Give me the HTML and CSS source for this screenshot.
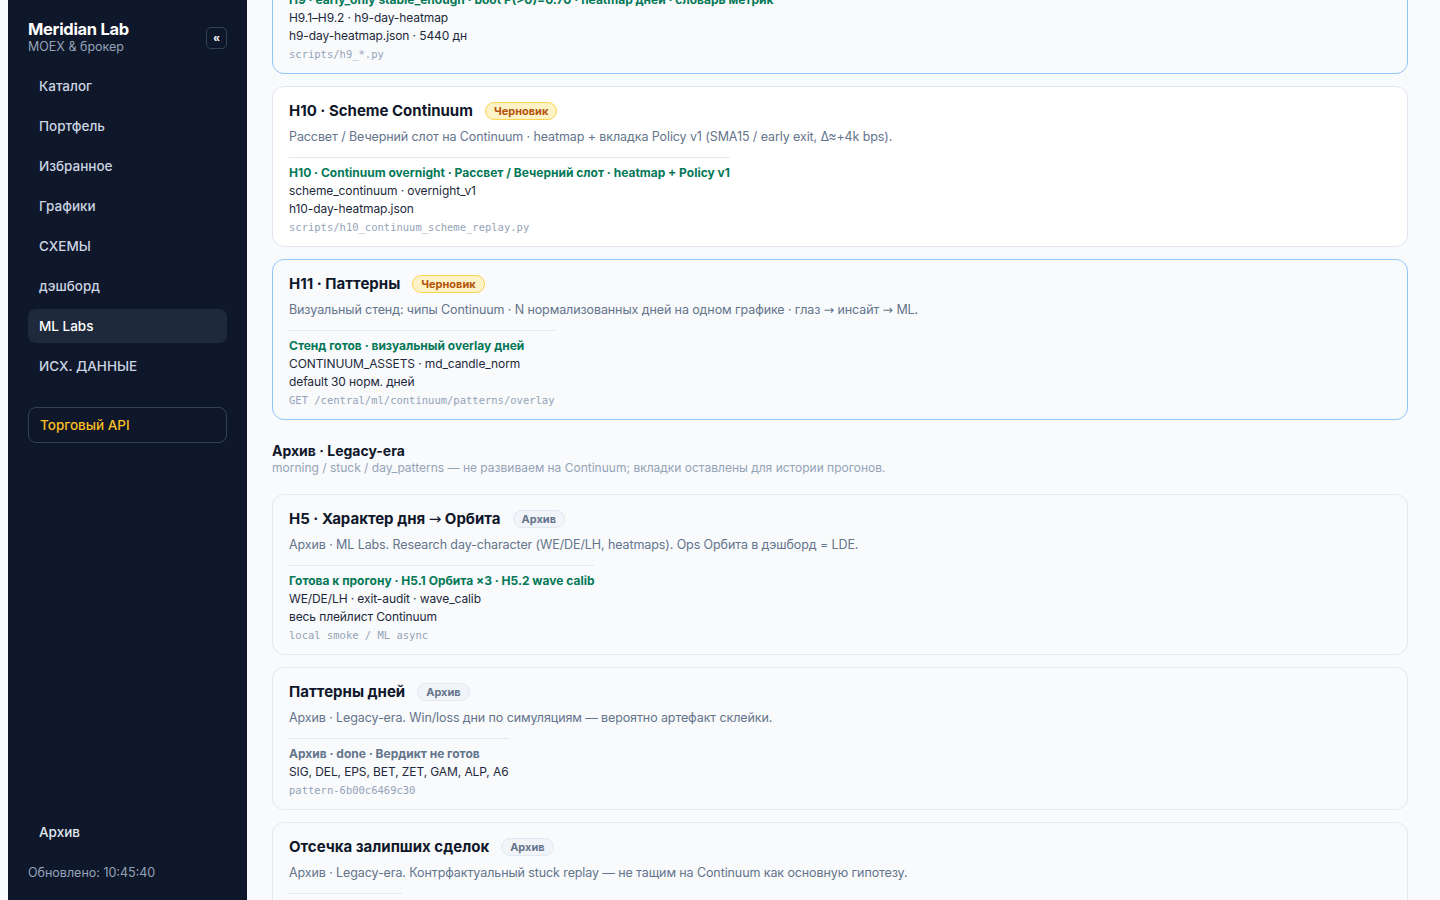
FILE: index.html
```html
<!DOCTYPE html>
<html lang="ru">
<head>
    <meta charset="UTF-8">
    <meta name="viewport" content="width=device-width, initial-scale=1.0">
    <title>ML Labs · Meridian Lab</title>
    <link rel="stylesheet" href="styles.css">
</head>
<body>
    <div class="app">
        <aside class="sidebar">
            <div class="brand">
                <div>
                    <div class="brand-name">Meridian Lab</div>
                    <div class="brand-sub">MOEX &amp; брокер</div>
                </div>
                <button class="collapse-btn" type="button">«</button>
            </div>

            <nav class="nav">
                <a class="nav-item" href="#">Каталог</a>
                <a class="nav-item" href="#">Портфель</a>
                <a class="nav-item" href="#">Избранное</a>
                <a class="nav-item" href="#">Графики</a>
                <a class="nav-item" href="#">СХЕМЫ</a>
                <a class="nav-item" href="#">дэшборд</a>
                <a class="nav-item active" href="#">ML Labs</a>
                <a class="nav-item" href="#">ИСХ. ДАННЫЕ</a>
            </nav>

            <a class="nav-item api-link" href="#">Торговый API</a>

            <div class="sidebar-bottom">
                <a class="nav-item" href="#">Архив</a>
                <div class="updated">Обновлено: 10:45:40</div>
            </div>
        </aside>

        <main class="main" id="main">
            <h1 class="page-title">ML Labs</h1>
            <p class="section-sub">Гипотезы на Continuum: стенды, прогоны, артефакты.</p>

            <div class="card-list">
                <div class="card current">
                    <div class="card-head">
                        <h3>H9 · Heatmap дней</h3>
                        <span class="badge done">Готово</span>
                    </div>
                    <p class="card-desc">Heatmap по дням Continuum · устойчивость early_only и словарь метрик.</p>
                    <div class="meta">
                        <div class="meta-status">H9 · early_only stable_enough · boot P(&gt;0)=0.70 · heatmap дней · словарь метрик</div>
                        <div class="meta-line">H9.1–H9.2 · h9-day-heatmap</div>
                        <div class="meta-line">h9-day-heatmap.json · 5440 дн</div>
                        <div class="meta-code">scripts/h9_*.py</div>
                    </div>
                </div>

                <div class="card white" id="anchor">
                    <div class="card-head">
                        <h3>H10 · Scheme Continuum</h3>
                        <span class="badge draft">Черновик</span>
                    </div>
                    <p class="card-desc">Рассвет / Вечерний слот на Continuum · heatmap + вкладка Policy v1 (SMA15 / early exit, Δ≈+4k bps).</p>
                    <div class="meta">
                        <div class="meta-status">H10 · Continuum overnight · Рассвет / Вечерний слот · heatmap + Policy v1</div>
                        <div class="meta-line">scheme_continuum · overnight_v1</div>
                        <div class="meta-line">h10-day-heatmap.json</div>
                        <div class="meta-code">scripts/h10_continuum_scheme_replay.py</div>
                    </div>
                </div>

                <div class="card current">
                    <div class="card-head">
                        <h3>H11 · Паттерны</h3>
                        <span class="badge draft">Черновик</span>
                    </div>
                    <p class="card-desc">Визуальный стенд: чипы Continuum · N нормализованных дней на одном графике · глаз <span class="arrow">→</span> инсайт <span class="arrow">→</span> ML.</p>
                    <div class="meta">
                        <div class="meta-status">Стенд готов · визуальный overlay дней</div>
                        <div class="meta-line">CONTINUUM_ASSETS · md_candle_norm</div>
                        <div class="meta-line">default 30 норм. дней</div>
                        <div class="meta-code">GET /central/ml/continuum/patterns/overlay</div>
                    </div>
                </div>
            </div>

            <h2 class="section-title">Архив · Legacy-era</h2>
            <p class="section-sub">morning / stuck / day_patterns — не развиваем на Continuum; вкладки оставлены для истории прогонов.</p>

            <div class="card-list">
                <div class="card">
                    <div class="card-head">
                        <h3>H5 · Характер дня <span class="arrow">→</span> Орбита</h3>
                        <span class="badge archive">Архив</span>
                    </div>
                    <p class="card-desc">Архив · ML Labs. Research day-character (WE/DE/LH, heatmaps). Ops Орбита в дэшборд = LDE.</p>
                    <div class="meta">
                        <div class="meta-status">Готова к прогону · H5.1 Орбита ×3 · H5.2 wave calib</div>
                        <div class="meta-line">WE/DE/LH · exit-audit · wave_calib</div>
                        <div class="meta-line">весь плейлист Continuum</div>
                        <div class="meta-code">local smoke / ML async</div>
                    </div>
                </div>

                <div class="card">
                    <div class="card-head">
                        <h3>Паттерны дней</h3>
                        <span class="badge archive">Архив</span>
                    </div>
                    <p class="card-desc">Архив · Legacy-era. Win/loss дни по симуляциям — вероятно артефакт склейки.</p>
                    <div class="meta">
                        <div class="meta-status muted">Архив · done · Вердикт не готов</div>
                        <div class="meta-line">SIG, DEL, EPS, BET, ZET, GAM, ALP, A6</div>
                        <div class="meta-code">pattern-6b00c6469c30</div>
                    </div>
                </div>

                <div class="card">
                    <div class="card-head">
                        <h3>Отсечка залипших сделок</h3>
                        <span class="badge archive">Архив</span>
                    </div>
                    <p class="card-desc">Архив · Legacy-era. Контрфактуальный stuck replay — не тащим на Continuum как основную гипотезу.</p>
                    <div class="meta">
                        <div class="meta-status muted">Архив · done</div>
                        <div class="meta-line">stuck_replay · cutoff</div>
                        <div class="meta-code">stuck-replay</div>
                    </div>
                </div>
            </div>
        </main>
    </div>

    <script src="main.js"></script>
</body>
</html>
```

FILE: styles.css
```css
body {
    font-family: Inter, "Noto Sans", Arial, sans-serif;
    background-color: #f8fafc;
    color: #0f172a;
    margin: 0;
    padding: 0;
}

.app {
    display: flex;
    height: 100vh;
    padding-left: 8px;
}

/* sidebar */
.sidebar {
    width: 239px;
    flex-shrink: 0;
    box-sizing: border-box;
    background-color: #0f172a;
    padding: 19px 20px 20px;
    display: flex;
    flex-direction: column;
}

.brand {
    display: flex;
    align-items: center;
    justify-content: space-between;
    margin-bottom: 15px;
}

.brand-name {
    color: #ffffff;
    font-size: 16.5px;
    font-weight: 700;
    line-height: 20px;
    letter-spacing: -0.3px;
}

.brand-sub {
    color: #94a3b8;
    font-size: 12.5px;
    line-height: 15px;
}

.collapse-btn {
    width: 21px;
    height: 22px;
    padding: 0;
    background: transparent;
    border: 1px solid #334155;
    border-radius: 5px;
    color: #ffffff;
    font-size: 12px;
    font-weight: 700;
    line-height: 18px;
    margin-top: 2px;
}

.nav {
    display: flex;
    flex-direction: column;
    gap: 6px;
}

.nav-item {
    display: block;
    padding: 8px 11px;
    border-radius: 8px;
    color: #cbd5e1;
    font-size: 13.5px;
    font-weight: 500;
    line-height: 18px;
    text-decoration: none;
}

.nav-item.active {
    background-color: #1e293b;
    color: #ffffff;
}

.api-link {
    margin-top: 24px;
    border: 1px solid #334155;
    color: #fbbf24;
}

.sidebar-bottom {
    margin-top: auto;
}

.sidebar-bottom .nav-item {
    color: #e2e8f0;
}

.updated {
    color: #94a3b8;
    font-size: 12.5px;
    margin-top: 16px;
}

/* main column */
.main {
    flex: 1;
    overflow: hidden;
    padding: 24px 32px 240px 25px;
}

.page-title {
    font-size: 20px;
    margin: 0 0 4px;
}

.section-title {
    font-size: 14px;
    font-weight: 700;
    line-height: 18px;
    margin: 22px 0 0;
}

.section-sub {
    color: #94a3b8;
    font-size: 12px;
    line-height: 16px;
    margin: 0 0 18px;
}

.card-list {
    display: flex;
    flex-direction: column;
    gap: 12px;
}

.card {
    background-color: #f8fafc;
    border: 1px solid #e2e8f0;
    border-radius: 12px;
    padding: 14px 16px 10px;
}

.card.white {
    background-color: #ffffff;
}

.card.current {
    border-color: #93c5fd;
}

.card-head {
    display: flex;
    align-items: center;
    gap: 12px;
}

.card-head h3 {
    margin: 0;
    font-size: 15px;
    font-weight: 700;
    line-height: 20px;
    color: #0f172a;
}

/* thin long arrow, as in the system font */
.arrow {
    font-family: "DejaVu Sans", sans-serif;
    font-weight: 400;
    line-height: 0;
}

.badge {
    font-size: 11px;
    font-weight: 700;
    line-height: 14px;
    padding: 1px 8px;
    border-radius: 999px;
    border: 1px solid transparent;
}

.badge.draft {
    background-color: #fef3c7;
    border-color: #fcd34d;
    color: #b45309;
}

.badge.archive {
    background-color: #f1f5f9;
    border-color: #e2e8f0;
    color: #64748b;
}

.badge.done {
    background-color: #dcfce7;
    border-color: #86efac;
    color: #15803d;
}

.card-desc {
    margin: 7px 0 11px;
    color: #64748b;
    font-size: 12.5px;
    letter-spacing: -0.1px;
    line-height: 18px;
}

.meta {
    display: inline-block;
    border-top: 1px solid #e2e8f0;
    padding-top: 6px;
}

.meta-status {
    color: #047857;
    font-size: 12px;
    font-weight: 700;
    line-height: 18px;
}

.meta-status.muted {
    color: #64748b;
}

.meta-line {
    color: #1e293b;
    font-size: 12px;
    letter-spacing: -0.1px;
    line-height: 18px;
}

.meta-code {
    color: #94a3b8;
    font-family: "DejaVu Sans Mono", "Liberation Mono", monospace;
    font-size: 10.5px;
    line-height: 18px;
}
```

FILE: main.js
```js
// keep the H10 card in view on load
const main = document.getElementById('main');
const anchor = document.getElementById('anchor');
main.scrollTop += Math.round(anchor.getBoundingClientRect().top) - 86;
```
